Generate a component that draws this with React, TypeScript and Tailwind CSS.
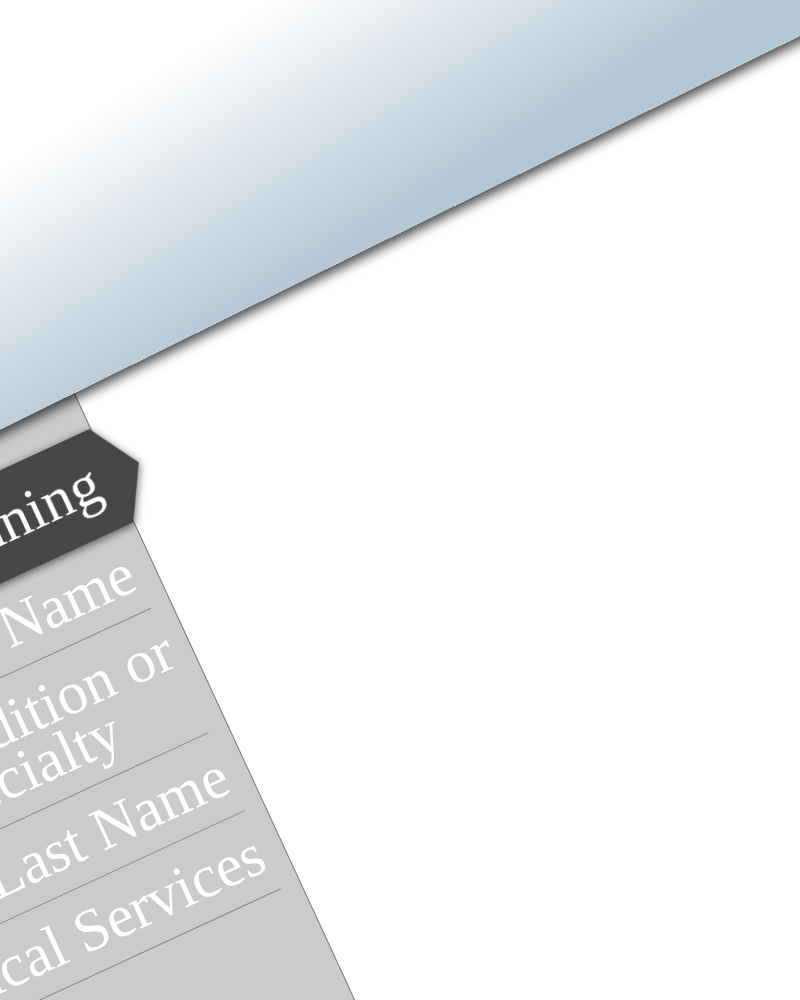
const searchOptions = [
  { label: 'First Name' },
  { label: 'Condition or', sub: 'Specialty' },
  { label: 'Last Name' },
  { label: 'Medical Services' },
];

export default function App() {
  return (
    <div className="relative h-[1000px] w-[800px] overflow-hidden bg-white font-['Liberation_Serif','Times_New_Roman',serif]">
      {/* whole page is tilted */}
      <div className="absolute left-0 top-0 h-[1300px] w-[1250px] origin-top-left [transform:rotate(-24.8deg)_translate(-460px,-20px)]">
        {/* header band */}
        <header className="relative z-10 h-[417px] w-full origin-top-left [transform:skewY(-1.41deg)] bg-[linear-gradient(174deg,#ffffff_41%,#b4c7d5_88%)] shadow-[0_6px_12px_rgba(0,0,0,0.7)]" />

        <div className="-mt-[37px] flex">
          <aside className="h-[820px] w-[363px] border-r border-[#7c7c7c] bg-[#cbcbcb] pt-[67px]">
            {/* tab */}
            <div className="relative w-[393px] drop-shadow-[0_2px_4px_rgba(0,0,0,0.6)]">
              <div className="h-[103px] bg-[#474747] [clip-path:polygon(0_0,361px_0,392px_51px,362px_103px,0_103px)]">
                <div className="flex w-[347px] justify-end whitespace-nowrap pt-[24px] text-[60px] leading-[51px] text-white">
                  Start Planning
                </div>
              </div>
            </div>

            <ul className="mr-[20px]">
              {searchOptions.map((item) => (
                <li
                  key={item.label}
                  className={`flex whitespace-nowrap border-b border-[#8a8a8a] pt-[18px] pb-[16px] text-[60px] text-white ${
                    item.sub ? 'justify-start pl-[38px] leading-[51px]' : 'justify-end pr-[2px] leading-[51px]'
                  }`}
                >
                  <span>
                    {item.label}
                    {item.sub && (
                      <>
                        <br />
                        {item.sub}
                      </>
                    )}
                  </span>
                </li>
              ))}
            </ul>
          </aside>
        </div>
      </div>
    </div>
  );
}
